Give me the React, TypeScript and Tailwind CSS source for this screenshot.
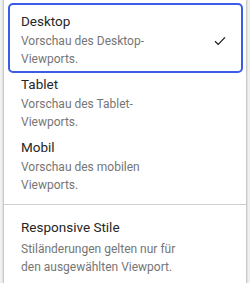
import React from 'react';

interface ViewportOption {
  id: string;
  label: string;
  description: string;
}

const OPTIONS: ViewportOption[] = [
  { id: 'desktop', label: 'Desktop', description: 'Vorschau des Desktop-Viewports.' },
  { id: 'tablet', label: 'Tablet', description: 'Vorschau des Tablet-Viewports.' },
  { id: 'mobile', label: 'Mobil', description: 'Vorschau des mobilen Viewports.' },
];

const font = { fontFamily: '"Segoe UI", Roboto, "Noto Sans", sans-serif' };

const CheckIcon: React.FC = () => (
  <svg width="12" height="10" viewBox="0 0 12 10" fill="none" stroke="#1f1f1f" strokeWidth={1.3}>
    <path d="M1 5.2 L4.2 8.4 L11 1.4" />
  </svg>
);

export default function App() {
  const selected = 'desktop';

  return (
    <div className="w-[250px] h-[283px] overflow-hidden bg-[#f0f0f0] flex" style={font}>
      {/* page behind the flyout */}
      <div className="w-[3px] shrink-0 border-r border-[#e2e2e2]" />

      {/* flyout */}
      <div className="w-[244px] shrink-0 bg-white border-x border-[#c9c9c9] pt-px">
        {OPTIONS.map((opt) => (
          <div key={opt.id} className="relative h-[63px] pl-[17px] pr-[20px] pt-[11px] flex">
            {opt.id === selected && (
              <div className="absolute left-[4px] right-[3px] top-[2px] h-[70px] rounded-[5px] border-2 border-[#3b5ce6]" />
            )}
            <div className="flex-1">
              <div className="text-[13.5px] leading-[19px] font-normal text-[#262626]">{opt.label}</div>
              <div className="mt-px w-[150px] text-[12px] leading-[18px] text-[#767676]">{opt.description}</div>
            </div>
            {opt.id === selected && (
              <div className="pt-[24px]">
                <CheckIcon />
              </div>
            )}
          </div>
        ))}

        <div className="mt-[14px] h-px bg-[#cfcfcf]" />

        <div className="pl-[17px] pt-[13px]">
          <div className="text-[13.5px] leading-[19px] font-normal text-[#262626]">Responsive Stile</div>
          <div className="mt-[3px] w-[170px] text-[12px] leading-[18px] text-[#767676]">
            Stiländerungen gelten nur für den ausgewählten Viewport.
          </div>
        </div>
      </div>

      <div className="flex-1 border-l border-[#e2e2e2]" />
    </div>
  );
}
